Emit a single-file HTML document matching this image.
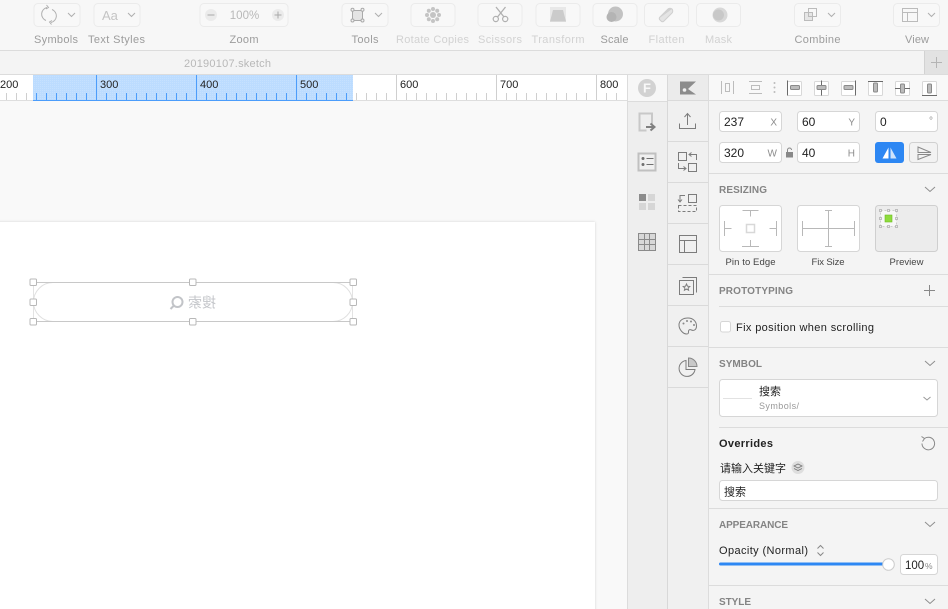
<!DOCTYPE html>
<html><head><meta charset="utf-8"><style>
html,body{margin:0;padding:0;width:948px;height:609px;overflow:hidden;background:#f8f8f8}
svg{display:block;font-family:"Liberation Sans","Noto Sans CJK SC",sans-serif;filter:blur(.35px)}
.l{font-size:11px;text-anchor:middle;fill:#9c9c9c}
.d{font-size:11px;text-anchor:middle;fill:#d2d2d2}
.s{font-size:10px;font-weight:bold;fill:#848484}
.v{font-size:12px;fill:#222}
.u{font-size:10px;fill:#8c8c8c;text-anchor:end}
.r{font-size:11px;fill:#222}
.btn{fill:#f8f8f8;stroke:#ebebeb}
.ic{fill:none;stroke:#b0b0b0}
.in{fill:none;stroke:#7c7c7c}
.f{fill:#fff;stroke:#d6d6d6}
.h{fill:#fff;stroke:#b8b8b8}
.c{fill:none;stroke:#8e8e8e}
</style></head><body>
<svg width="948" height="609" viewBox="0 0 948 609" xmlns="http://www.w3.org/2000/svg">
<defs>
<pattern id="dots" width="2" height="2" patternUnits="userSpaceOnUse"><rect width="2" height="2" fill="#bcdcff"/><rect width="1" height="1" fill="#c6e1ff"/></pattern>
<filter id="sh" x="-5%" y="-5%" width="110%" height="110%"><feDropShadow dx="0" dy="0" stdDeviation="1.4" flood-color="#000" flood-opacity=".16"/></filter>
</defs>

<!-- toolbar -->
<rect width="948" height="50" fill="#f7f7f7"/>
<rect y="50" width="948" height="1" fill="#dcdcdc"/>
<rect y="51" width="948" height="23" fill="#f4f4f4"/>
<rect y="74" width="948" height="1" fill="#dcdcdc"/>

<rect class="btn" x="34" y="3.500" width="46" height="23" rx="4"/>
<rect class="btn" x="94" y="3.500" width="46" height="23" rx="4"/>
<rect class="btn" x="200" y="3.500" width="88" height="23" rx="4"/>
<rect class="btn" x="342" y="3.500" width="46" height="23" rx="4"/>
<rect class="btn" x="411" y="3.500" width="44" height="23" rx="4"/>
<rect class="btn" x="478" y="3.500" width="44" height="23" rx="4"/>
<rect class="btn" x="536" y="3.500" width="44" height="23" rx="4"/>
<rect class="btn" x="593" y="3.500" width="44" height="23" rx="4"/>
<rect class="btn" x="644.500" y="3.500" width="44" height="23" rx="4"/>
<rect class="btn" x="696.500" y="3.500" width="44" height="23" rx="4"/>
<rect class="btn" x="794.500" y="3.500" width="46" height="23" rx="4"/>
<rect class="btn" x="893.500" y="3.500" width="46" height="23" rx="4"/>

<!-- toolbar icons -->
<path class="ic" d="M46 20.500a6.800 6.800 0 0 1 1-13M46.500 5l2 2.500-2.500 1.500M52 9.500a6.800 6.800 0 0 1-1 13M51.500 24.500l-2-2.500 2.500-1.500"/>
<path class="ic" d="M68 13l3.500 3.500L75 13M128 13l3.500 3.500L135 13M375 13l3.500 3.500L382 13M828 13l3.500 3.500L835 13M928 13l3.500 3.500L935 13"/>
<text x="102" y="20" font-size="13" fill="#c4c4c4">Aa</text>
<circle cx="211" cy="15" r="6" fill="#ebebeb"/><path d="M207.500 15h7" stroke="#aaa"/>
<circle cx="278" cy="15" r="6" fill="#ebebeb"/><path d="M274.500 15h7M278 11.500v7" stroke="#aaa"/>
<text x="244.500" y="19" font-size="11.500" text-anchor="middle" fill="#b8b8b8">100%</text>
<rect x="352.500" y="10.500" width="10" height="10" fill="#e4e4e4" stroke="#aaa"/>
<g fill="#f4f4f4" stroke="#aaa"><circle cx="352.500" cy="9.800" r="1.500"/><circle cx="362.500" cy="9.800" r="1.500"/><circle cx="352.500" cy="20.500" r="1.500"/><circle cx="362.500" cy="20.500" r="1.500"/></g>
<g fill="#c4c4c4"><circle cx="433" cy="15" r="3"/><circle cx="433" cy="9" r="2"/><circle cx="433" cy="21" r="2"/><circle cx="427" cy="15" r="2"/><circle cx="439" cy="15" r="2"/><circle cx="428.800" cy="10.800" r="2"/><circle cx="437.200" cy="10.800" r="2"/><circle cx="428.800" cy="19.200" r="2"/><circle cx="437.200" cy="19.200" r="2"/></g>
<path d="M496 7l8 10M505.500 7l-8 10" stroke="#b0b0b0" stroke-width="1.300" fill="none"/><circle cx="495.800" cy="19" r="2.600" fill="none" stroke="#b0b0b0" stroke-width="1.200"/><circle cx="505.200" cy="19" r="2.600" fill="none" stroke="#b0b0b0" stroke-width="1.200"/>
<rect x="550" y="7" width="16" height="15" fill="#e8e8e8"/><path d="M553 10h10l3 11.500h-16z" fill="#cbcbcb"/>
<circle cx="615.500" cy="14" r="7.500" fill="#c2c2c2"/><circle cx="611.500" cy="17" r="5" fill="#b4b4b4"/>
<path d="M661 21l-1-1c-1-1-1-2 0-3l8-8c1-1 3-1 4 0s1 3 0 4l-8 8c-1 1-2 1-3 0z" fill="#e4e4e4" stroke="#cfcfcf"/><path d="M660.500 17.500l8-8.500c1-1 2.500-1 3.500 0" fill="#d0d0d0"/>
<circle cx="720" cy="15" r="7.500" fill="#d8d8d8"/><circle cx="718.500" cy="15" r="5.500" fill="#c8c8c8"/>
<rect x="804.500" y="12.500" width="8" height="8" fill="#e6e6e6" stroke="#bbb"/><rect x="808.500" y="8.500" width="8" height="8" fill="none" stroke="#bbb"/>
<rect x="902.500" y="8.500" width="15" height="13" fill="none" stroke="#bbb"/><path d="M902.500 12.500h15M907.500 12.500v9" stroke="#bbb" fill="none"/>

<text class="l" x="56" y="43" textLength="44">Symbols</text>
<text class="l" x="116.500" y="43" textLength="57">Text Styles</text>
<text class="l" x="244" y="43" textLength="29">Zoom</text>
<text class="l" x="365" y="43" textLength="27">Tools</text>
<text class="d" x="432.500" y="43" textLength="73">Rotate Copies</text>
<text class="d" x="500" y="43" textLength="44">Scissors</text>
<text class="d" x="558" y="43" textLength="53">Transform</text>
<text class="l" x="614.500" y="43" textLength="28">Scale</text>
<text class="d" x="666.500" y="43" textLength="36">Flatten</text>
<text class="d" x="718.500" y="43" textLength="27">Mask</text>
<text class="l" x="817.500" y="43" textLength="46">Combine</text>
<text class="l" x="917" y="43" textLength="24">View</text>

<!-- tab bar -->
<text x="184" y="67" font-size="11" fill="#b8b8b8" textLength="87">20190107.sketch</text>
<rect x="924" y="51" width="24" height="23" fill="#e2e2e2"/><rect x="924" y="51" width="1" height="23" fill="#d2d2d2"/>
<path d="M936.500 57v11M931 62.500h11" stroke="#b4b4b4" fill="none"/>

<!-- canvas -->
<rect y="101" width="627" height="508" fill="#f9f9f9"/>
<rect x="-10" y="222" width="605" height="400" fill="#fff" filter="url(#sh)"/>

<!-- ruler -->
<rect y="75" width="627" height="25" fill="#fff"/>
<rect x="33" y="75" width="320" height="25" fill="url(#dots)"/>
<rect y="100" width="627" height="1" fill="#dedede"/>
<rect x="33" y="100" width="320" height="1" fill="#4c9dfb"/>
<path stroke="#cfcfcf" fill="none" d="M6.500 93v7M16.500 93v7M26.500 93v7M356.500 93v7M366.500 93v7M376.500 93v7M386.500 93v7M406.500 93v7M416.500 93v7M426.500 93v7M436.500 93v7M446.500 93v7M456.500 93v7M466.500 93v7M476.500 93v7M486.500 93v7M506.500 93v7M516.500 93v7M526.500 93v7M536.500 93v7M546.500 93v7M556.500 93v7M566.500 93v7M576.500 93v7M586.500 93v7M606.500 93v7M616.500 93v7"/>
<path stroke="#cfcfcf" fill="none" d="M396.500 75v25M496.500 75v25M596.500 75v25"/>
<path stroke="#4c9dfb" fill="none" d="M36.500 93v7M46.500 93v7M56.500 93v7M66.500 93v7M76.500 93v7M86.500 93v7M106.500 93v7M116.500 93v7M126.500 93v7M136.500 93v7M146.500 93v7M156.500 93v7M166.500 93v7M176.500 93v7M186.500 93v7M206.500 93v7M216.500 93v7M226.500 93v7M236.500 93v7M246.500 93v7M256.500 93v7M266.500 93v7M276.500 93v7M286.500 93v7M306.500 93v7M316.500 93v7M326.500 93v7M336.500 93v7M346.500 93v7M96.500 75v25M196.500 75v25M296.500 75v25"/>
<g font-size="11" fill="#222"><text x="0" y="88">200</text><text x="100" y="88">300</text><text x="200" y="88">400</text><text x="300" y="88">500</text><text x="400" y="88">600</text><text x="500" y="88">700</text><text x="600" y="88">800</text></g>

<!-- selected layer -->
<rect x="33.500" y="282.500" width="319" height="39" rx="19.500" fill="#fff" stroke="#e0e0e0"/>
<rect x="33.500" y="282.500" width="319" height="39" fill="none" stroke="#dcdcdc" stroke-width=".8"/>
<path d="M33 282.500h320M33 321.500h320" stroke="#c8c8c8" fill="none"/>
<circle cx="177.500" cy="302" r="5" fill="none" stroke="#c2c4c8" stroke-width="2"/><path d="M173.500 306l-3 3" stroke="#c2c4c8" stroke-width="2"/>
<text x="202" y="307.500" font-size="14" text-anchor="middle" fill="#c4c6ca" transform="translate(404 0) scale(-1 1)">搜索</text>
<g class="h"><rect x="30" y="279" width="6.500" height="6.500" rx="1"/><rect x="189.500" y="279" width="6.500" height="6.500" rx="1"/><rect x="350" y="279" width="6.500" height="6.500" rx="1"/><rect x="30" y="299" width="6.500" height="6.500" rx="1"/><rect x="350" y="299" width="6.500" height="6.500" rx="1"/><rect x="30" y="318.500" width="6.500" height="6.500" rx="1"/><rect x="189.500" y="318.500" width="6.500" height="6.500" rx="1"/><rect x="350" y="318.500" width="6.500" height="6.500" rx="1"/></g>

<!-- plugin strip 1 -->
<rect x="627" y="101" width="41" height="508" fill="#eeeeee"/>
<rect x="627" y="75" width="41" height="26" fill="#f7f7f7"/>
<rect x="627" y="75" width="1" height="534" fill="#dcdcdc"/>
<rect x="627" y="101" width="41" height="1" fill="#dcdcdc"/>
<circle cx="647" cy="88" r="9" fill="#d2d2d2"/><text x="647" y="92.500" font-size="13" font-weight="bold" text-anchor="middle" fill="#f8f8f8">F</text>
<path d="M652 124v-10.500h-12.500v17h7" fill="none" stroke="#c8c8c8" stroke-width="2"/>
<path d="M646 127h7M650.500 123.500l4 3.500-4 3.500" fill="none" stroke="#808080" stroke-width="2"/>
<rect x="638.500" y="153.500" width="17" height="17" fill="#f0f0f0" stroke="#c0c0c0" stroke-width="2"/>
<circle cx="643" cy="158.500" r="1.500" fill="#707070"/><circle cx="643" cy="164.500" r="1.500" fill="#707070"/><path d="M646.500 158.500h7M646.500 164.500h7" stroke="#707070" fill="none"/>
<rect x="639" y="194" width="7" height="7" fill="#8c8c8c"/><rect x="648" y="194" width="7" height="7" fill="#d6d6d6"/><rect x="639" y="203" width="7" height="7" fill="#d6d6d6"/><rect x="648" y="203" width="7" height="7" fill="#d6d6d6"/>
<rect x="638.500" y="233.500" width="17" height="17" fill="#d8d8d8"/>
<path d="M638.500 233.500h17v17h-17zM638.500 239.500h17M638.500 244.500h17M644.500 233.500v17M649.500 233.500v17" fill="none" stroke="#8a8a8a"/>

<!-- plugin strip 2 -->
<rect x="668" y="75" width="41" height="534" fill="#f0f0f0"/>
<rect x="668" y="75" width="40" height="26" fill="#ebebeb"/>
<rect x="667" y="75" width="1" height="534" fill="#d8d8d8"/>
<rect x="708" y="75" width="1" height="534" fill="#dcdcdc"/>
<g fill="#dadada"><rect x="668" y="100" width="40" height="1"/><rect x="668" y="141" width="40" height="1"/><rect x="668" y="182" width="40" height="1"/><rect x="668" y="223" width="40" height="1"/><rect x="668" y="264" width="40" height="1"/><rect x="668" y="305" width="40" height="1"/><rect x="668" y="346" width="40" height="1"/><rect x="668" y="387" width="40" height="1"/></g>
<path d="M680 81.500h16l-8 7.500 8 5.500h-16z" fill="#8c8c8c"/><circle cx="684.500" cy="90" r="1.800" fill="#f0f0f0"/>
<path d="M679.500 123.500v5h16v-5M687.500 125v-11M684.500 117l3-3.500 3 3.500" class="in"/>
<g class="in"><rect x="678.500" y="152.500" width="8" height="8"/><rect x="688.500" y="163.500" width="8" height="8"/><path d="M696.500 160v-5.500h-7M691.500 152.500l-2.500 2 2.500 2M678.500 163v5.500h7M683.500 166.500l2.500 2-2.500 2"/><rect x="688.500" y="194.500" width="8" height="8"/><path d="M678.500 205.500h18v6h-18z" stroke-dasharray="3 2"/><path d="M685 195.500h-5v6M678 199.500l2 2.500 2-2.500"/><rect x="679.500" y="235.500" width="17" height="17"/><path d="M679.500 240.500h17M684.500 240.500v12"/><path d="M682.500 277.500h14v15"/><rect x="679.500" y="280.500" width="14" height="14"/></g>
<path d="M686.500 284l1 2.200 2.300.3-1.700 1.500.5 2.300-2.100-1.200-2.100 1.200.5-2.300-1.700-1.500 2.300-.3z" class="in"/>
<path d="M679 325c0-5 4.500-7 9-7s8.500 3 8.500 8c0 4-3 5-5 4s-3 0-3 1.500 0 2.500-2 2.500c-3 0-7.500-4-7.500-9z" class="in"/>
<g fill="#888"><circle cx="683.500" cy="323.500" r="1"/><circle cx="687" cy="321" r="1"/><circle cx="691" cy="321.500" r="1"/><circle cx="694" cy="325" r="1"/></g>
<path d="M686 360.500a8 8 0 1 0 9 9h-9z" class="in"/><path d="M688.500 358a8.500 8.500 0 0 1 8.500 8.500h-8.500z" fill="#c8c8c8" stroke="#888"/>

<!-- inspector -->
<rect x="709" y="75" width="239" height="534" fill="#f4f4f4"/>
<rect x="709" y="75" width="239" height="25" fill="#f8f8f8"/>
<g fill="#dcdcdc"><rect x="709" y="100" width="239" height="1"/><rect x="709" y="173" width="239" height="1"/><rect x="709" y="274" width="239" height="1"/><rect x="719" y="306" width="229" height="1"/><rect x="709" y="347" width="239" height="1"/><rect x="719" y="427" width="229" height="1"/><rect x="709" y="508" width="239" height="1"/><rect x="709" y="585" width="239" height="1"/></g>

<!-- align row -->
<g fill="none" stroke="#bcbcbc"><path d="M721.500 81v13M733.500 81v13"/><rect x="725.500" y="83.500" width="4" height="8"/><path d="M749 81.500h13M749 93.500h13"/><rect x="751.500" y="85.500" width="8" height="4"/></g>
<g fill="#bbb"><circle cx="774.500" cy="83" r="1"/><circle cx="774.500" cy="87.500" r="1"/><circle cx="774.500" cy="92" r="1"/></g>
<g fill="#fff" stroke="#d8d8d8"><rect x="787.500" y="81.500" width="14" height="14" rx="1"/><rect x="814.500" y="81.500" width="14" height="14" rx="1"/><rect x="841.500" y="81.500" width="14" height="14" rx="1"/><rect x="868.500" y="81.500" width="14" height="14" rx="1"/><rect x="895.500" y="81.500" width="14" height="14" rx="1"/><rect x="922.500" y="81.500" width="14" height="14" rx="1"/></g>
<g fill="none" stroke="#6a6a6a"><path d="M787.500 80.500v15M821.500 80.500v15M855.500 80.500v15M868 81.500h15M895 88.500h15M922 95.500h15"/></g>
<g fill="#bcbcbc" stroke="#8a8a8a"><rect x="790.500" y="85.500" width="9" height="4" rx="1"/><rect x="817" y="85.500" width="9" height="4" rx="1"/><rect x="844" y="85.500" width="9" height="4" rx="1"/><rect x="873.500" y="83" width="4" height="9" rx="1"/><rect x="900.500" y="84" width="4" height="9" rx="1"/><rect x="927.500" y="84" width="4" height="9" rx="1"/></g>

<!-- position -->
<rect class="f" x="719.500" y="111.500" width="62" height="20" rx="3"/>
<rect class="f" x="797.500" y="111.500" width="62" height="20" rx="3"/>
<rect class="f" x="875.500" y="111.500" width="62" height="20" rx="3"/>
<rect class="f" x="719.500" y="142.500" width="62" height="20" rx="3"/>
<rect class="f" x="797.500" y="142.500" width="62" height="20" rx="3"/>
<text class="v" x="724" y="126">237</text><text class="u" x="777" y="125.500">X</text>
<text class="v" x="802" y="126">60</text><text class="u" x="855" y="125.500">Y</text>
<text class="v" x="880" y="126">0</text><text class="u" x="933" y="124">°</text>
<text class="v" x="724" y="157">320</text><text class="u" x="777" y="156.500">W</text>
<text class="v" x="802" y="157">40</text><text class="u" x="855" y="156.500">H</text>
<rect x="786" y="152" width="7" height="5.500" fill="#888"/><path d="M787.500 152v-2a2 2 0 0 1 4 0" fill="none" stroke="#888"/>
<rect x="875" y="142" width="29" height="21" rx="3" fill="#2d87f3"/>
<path d="M888.500 147.500v11h-6z" fill="#fff"/><path d="M890.500 147.500v11h6z" fill="#cfe3fb"/>
<rect x="909.500" y="142.500" width="28" height="20" rx="3" fill="#f2f2f2" stroke="#d0d0d0"/>
<path d="M918 147l13 5.500h-13zM918 154.500h13l-13 5z" fill="none" stroke="#8a8a8a"/>

<!-- resizing -->
<text class="s" x="719" y="193" textLength="48">RESIZING</text>
<path class="c" d="M925 187l5 4.500 5-4.500M925 361l5 4.500 5-4.500M925 522l5 4.500 5-4.500M925 599l5 4.500 5-4.500"/>
<rect class="f" x="719.500" y="205.500" width="62" height="46" rx="3"/>
<rect class="f" x="797.500" y="205.500" width="62" height="46" rx="3"/>
<rect x="875.500" y="205.500" width="62" height="46" rx="3" fill="#ececec" stroke="#cfcfcf"/>
<g fill="none" stroke="#b8b8b8"><path d="M742.500 210.500h16M750.500 210.500v6M750.500 240v6M742 246.500h17M724.500 221v15M724.500 228.500h7M776.500 221v15M769.500 228.500h7"/><rect x="746.500" y="224.500" width="8" height="8" stroke="#d8d8d8" stroke-width="1.500"/><path d="M802.500 221v15M802.500 228.500h52M854.500 221v15M828.500 210.500v36M825 210.500h7M825 246.500h7"/></g>
<rect x="880.500" y="210.500" width="16" height="16" fill="#fff" fill-opacity=".6" stroke="#ccc" stroke-dasharray="2 2"/>
<rect x="885" y="215" width="7" height="7" fill="#8edb3e" stroke="#6cbc20" stroke-width=".6"/>
<g fill="#eee" stroke="#aaa" stroke-width=".7"><rect x="879.500" y="209.500" width="2" height="2"/><rect x="887.500" y="209.500" width="2" height="2"/><rect x="895.500" y="209.500" width="2" height="2"/><rect x="879.500" y="217.500" width="2" height="2"/><rect x="895.500" y="217.500" width="2" height="2"/><rect x="879.500" y="225.500" width="2" height="2"/><rect x="887.500" y="225.500" width="2" height="2"/><rect x="895.500" y="225.500" width="2" height="2"/></g>
<g font-size="9.500" text-anchor="middle" fill="#444"><text x="750.500" y="265" textLength="50">Pin to Edge</text><text x="828" y="265" textLength="33">Fix Size</text><text x="906.500" y="265" textLength="34">Preview</text></g>

<!-- prototyping -->
<text class="s" x="719" y="294" textLength="74">PROTOTYPING</text>
<path d="M929.500 285v11M924 290.500h11" fill="none" stroke="#888"/>
<rect class="f" x="720.500" y="321.500" width="10" height="10.500" rx="2"/>
<text class="r" x="736" y="331" textLength="138">Fix position when scrolling</text>

<!-- symbol -->
<text class="s" x="719" y="367" textLength="43">SYMBOL</text>
<rect class="f" x="719.500" y="379.500" width="218" height="37" rx="3"/>
<path d="M723 398.500h29" stroke="#e2e2e2" fill="none"/>
<text x="759" y="395" font-size="11" fill="#222">搜索</text>
<text x="759" y="409" font-size="9" fill="#999" textLength="40">Symbols/</text>
<path d="M923.500 397l3.500 3 3.500-3" fill="none" stroke="#999"/>

<!-- overrides -->
<text x="719" y="447" font-size="11" font-weight="bold" fill="#222" textLength="54">Overrides</text>
<path d="M924.500 438.500a6.300 6.300 0 1 1-2.500 5M921.500 436.500l3 2-2 3" fill="none" stroke="#888"/>
<text x="720" y="472" font-size="11" fill="#222">请输入关键字</text>
<circle cx="798" cy="467.500" r="6.500" fill="#dedede"/>
<path d="M794 466l4-2 4 2-4 2zM794 468.500l4 2 4-2" fill="none" stroke="#777" stroke-width=".8"/>
<rect class="f" x="719.500" y="480.500" width="218" height="20" rx="3"/>
<text x="724" y="495.500" font-size="11" fill="#222">搜索</text>

<!-- appearance -->
<text class="s" x="719" y="528" textLength="69">APPEARANCE</text>
<text class="r" x="719" y="554" textLength="89">Opacity (Normal)</text>
<path d="M817.500 548.500l3-3 3 3M817.500 552.500l3 3 3-3" fill="none" stroke="#888"/>
<rect x="719" y="562.500" width="168" height="3" rx="1.500" fill="#2d87f3"/>
<circle cx="888.500" cy="564.500" r="5.800" fill="#fff" stroke="#ccc"/>
<rect class="f" x="900.500" y="554.500" width="37" height="20" rx="3"/>
<text x="905" y="569" font-size="11.500" fill="#222">100</text><text x="925" y="569" font-size="8.500" fill="#888">%</text>

<!-- style -->
<text class="s" x="719" y="605" textLength="32">STYLE</text>
</svg>
</body></html>
